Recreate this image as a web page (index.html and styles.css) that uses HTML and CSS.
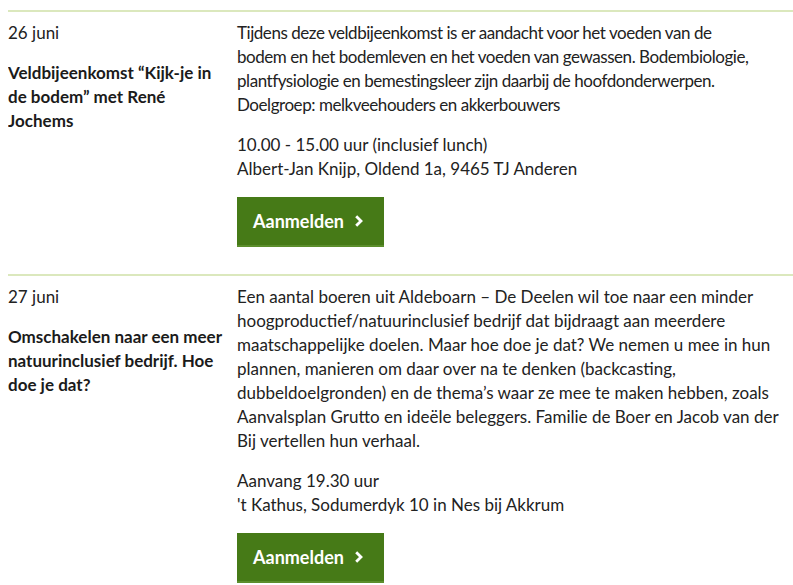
FILE: index.html
```html
<!DOCTYPE html>
<html lang="nl">
<head>
  <meta charset="UTF-8">
  <meta name="viewport" content="width=device-width, initial-scale=1.0">
  <title>Agenda</title>
  <link rel="stylesheet" href="styles.css">
</head>
<body>
  <div class="agenda">
    <div class="event">
      <div class="event-meta">
        <p class="event-date">26 juni</p>
        <h3 class="event-title">Veldbijeenkomst “Kijk-je in de bodem” met René Jochems</h3>
      </div>
      <div class="event-body">
        <p class="intro">Tijdens deze veldbijeenkomst is er aandacht voor het voeden van de bodem en het bodemleven en het voeden van gewassen. Bodembiologie, plantfysiologie en bemestingsleer zijn daarbij de hoofdonderwerpen.<br>Doelgroep: melkveehouders en akkerbouwers</p>
        <p>10.00 - 15.00 uur (inclusief lunch)<br>Albert-Jan Knijp, Oldend 1a, 9465 TJ Anderen</p>
        <a class="btn" href="#">Aanmelden
          <svg width="10" height="14" viewBox="0 0 10 14"><path d="M2.2 2.2 L7 7 L2.2 11.8" fill="none" stroke="#fff" stroke-width="2.8"/></svg>
        </a>
      </div>
    </div>
    <div class="event">
      <div class="event-meta">
        <p class="event-date">27 juni</p>
        <h3 class="event-title">Omschakelen naar een meer natuurinclusief bedrijf. Hoe doe je dat?</h3>
      </div>
      <div class="event-body">
        <p>Een aantal boeren uit Aldeboarn – De Deelen wil toe naar een minder hoogproductief/natuurinclusief bedrijf dat bijdraagt aan meerdere maatschappelijke doelen. Maar hoe doe je dat? We nemen u mee in hun plannen, manieren om daar over na te denken (backcasting, dubbeldoelgronden) en de thema’s waar ze mee te maken hebben, zoals Aanvalsplan Grutto en ideële beleggers. Familie de Boer en Jacob van der Bij vertellen hun verhaal.</p>
        <p>Aanvang 19.30 uur<br>'t Kathus, Sodumerdyk 10 in Nes bij Akkrum</p>
        <a class="btn" href="#">Aanmelden
          <svg width="10" height="14" viewBox="0 0 10 14"><path d="M2.2 2.2 L7 7 L2.2 11.8" fill="none" stroke="#fff" stroke-width="2.8"/></svg>
        </a>
      </div>
    </div>
  </div>
</body>
</html>
```

FILE: styles.css
```css
body {
  margin: 10px 0 0 8px;
  font-family: Lato, "Open Sans", sans-serif;
  font-size: 17px;
  line-height: 24px;
  color: #222;
  background: #fff;
}
.event {
  display: flex;
  border-top: 2px solid #dbe8bd;
  padding: 9px 0 27px;
}
.event-meta {
  width: 215px;
  flex-shrink: 0;
  margin-right: 14px;
}
.event-date {
  margin: 0 0 16px;
}
.event-title {
  margin: 0;
  font-size: 17px;
  line-height: 24px;
  font-weight: bold;
  color: #1b1b1b;
}
.event-body {
  flex: 1;
}
.event-body p {
  margin: 0 0 16px;
}
.event-body .intro {
  letter-spacing: -0.45px;
  max-width: 516px;
}
.btn {
  display: flex;
  width: fit-content;
  align-items: center;
  gap: 10px;
  margin-top: 1px;
  height: 48px;
  padding: 0 20px 0 16px;
  background: #467a17;
  border-bottom: 2px solid #5c8e2c;
  color: #fff;
  font-weight: bold;
  font-size: 18px;
  text-decoration: none;
}
```
